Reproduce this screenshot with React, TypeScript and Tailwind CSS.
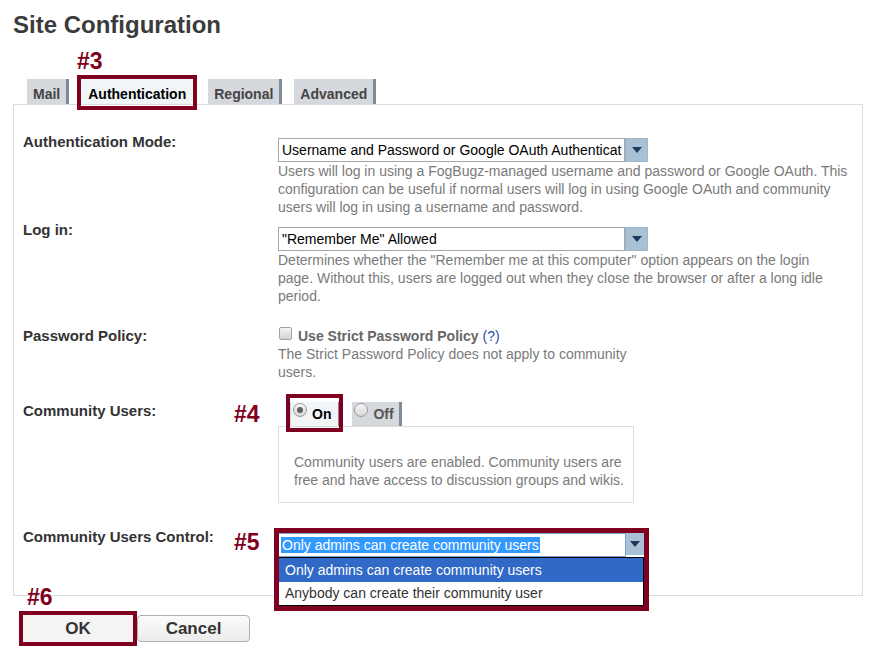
import type { ReactNode } from 'react';

const RED = 'border-[#800020]';

function Mark({ children, className }: { children: ReactNode; className?: string }) {
  return (
    <span className={`absolute text-[23px] leading-[26px] font-bold text-[#800020] ${className ?? ''}`}>
      {children}
    </span>
  );
}

function Label({ children, extra }: { children: ReactNode; extra?: ReactNode }) {
  return (
    <div className="relative w-[255px] shrink-0 text-[15px] font-bold leading-[18px] text-[#333]">
      {children}
      {extra}
    </div>
  );
}

function Arrow() {
  return (
    <svg width="10" height="6" viewBox="0 0 10 6">
      <path d="M0 0h10L5 6z" fill="#1b3a5c" />
    </svg>
  );
}

function Select({ value }: { value: string }) {
  return (
    <div className="flex h-[24px] w-[370px]">
      <div className="flex h-full w-[347px] items-center border border-[#a7a7a7] bg-white pl-[3px] text-[14px] leading-[22px] text-black whitespace-nowrap overflow-hidden">
        {value}
      </div>
      <div className="flex h-full w-[23px] items-center justify-center border border-[#9fb6c8] bg-[#a9c1d4]">
        <Arrow />
      </div>
    </div>
  );
}

function Desc({ children }: { children: ReactNode }) {
  return <div className="text-[14px] leading-[18px] text-[#7a7a7a] whitespace-nowrap">{children}</div>;
}

function Tab({ label, active }: { label: string; active?: boolean }) {
  return (
    <div
      className={`relative h-[25px] pt-[6px] px-[6px] text-[14px] leading-[18px] font-bold border-r-[3px] border-[#7e8b98] ${
        active ? 'bg-[#f2f5f8] text-black px-[7px]' : 'bg-[#d5d8dc] text-[#444]'
      }`}
    >
      {label}
      {active && <span className={`absolute -left-1 -top-1 -right-1 -bottom-[6px] border-4 ${RED}`} />}
    </div>
  );
}

function Radio({ label, on }: { label: string; on?: boolean }) {
  return (
    <div
      className={`relative flex h-[24px] items-start pl-[2px] border-r-[3px] border-[#7e8b98] ${
        on ? 'bg-[#f2f5f8] border-l border-l-[#cfd5db] pr-[7px]' : 'bg-[#d5d8dc] pr-[5px]'
      }`}
    >
      <div className="mt-[1px] flex h-[14px] w-[14px] items-center justify-center rounded-full border border-[#9c9c9c] bg-linear-to-b from-[#f6f6f6] to-[#d6d6d6]">
        {on && <div className="h-[6px] w-[6px] rounded-full bg-[#606060]" />}
      </div>
      <span className={`ml-[5px] mt-[3px] text-[14px] leading-[18px] font-bold ${on ? 'text-black' : 'text-[#555]'}`}>
        {label}
      </span>
      {on && <span className={`absolute -left-[5px] -top-[8px] -right-[5px] -bottom-[6px] border-4 ${RED}`} />}
    </div>
  );
}

export default function App() {
  return (
    <div className="relative h-[661px] w-[892px] overflow-hidden bg-white pl-[13px] font-['Liberation_Sans',Arial,sans-serif]">
      <h1 className="pt-[11px] text-[24px] leading-[28px] font-bold text-[#3b3b3b]">Site Configuration</h1>

      <div className="mt-[9px] h-[26px] pl-[64px] text-[23px] leading-[26px] font-bold text-[#800020]">#3</div>

      <div className="mt-[5px] flex gap-[12px] pl-[14px]">
        <Tab label="Mail" />
        <Tab label="Authentication" active />
        <Tab label="Regional" />
        <Tab label="Advanced" />
      </div>

      <div className="w-[850px] border border-[#dadce2] pl-[9px] pt-[28px] pb-[38px]">
        <div className="flex">
          <Label>Authentication Mode:</Label>
          <div className="pt-[5px]">
            <Select value="Username and Password or Google OAuth Authenticat" />
            <Desc>
              Users will log in using a FogBugz-managed username and password or Google OAuth. This
              <br />
              configuration can be useful if normal users will log in using Google OAuth and community
              <br />
              users will log in using a username and password.
            </Desc>
          </div>
        </div>

        <div className="mt-[5px] flex">
          <Label>Log in:</Label>
          <div className="pt-[6px]">
            <Select value={'"Remember Me" Allowed'} />
            <Desc>
              Determines whether the "Remember me at this computer" option appears on the login
              <br />
              page. Without this, users are logged out when they close the browser or after a long idle
              <br />
              period.
            </Desc>
          </div>
        </div>

        <div className="mt-[22px] flex">
          <Label>Password Policy:</Label>
          <div>
            <div className="flex items-start text-[14px] leading-[18px]">
              <div className="ml-[1px] h-[13px] w-[13px] rounded-[2px] border border-[#a2a2a2] bg-linear-to-b from-[#f4f4f4] to-[#d4d4d4]" />
              <span className="ml-[6px] font-bold text-[#666]">Use Strict Password Policy</span>
              <span className="ml-[4px] text-[#1f4fa3]">(?)</span>
            </div>
            <Desc>
              The Strict Password Policy does not apply to community
              <br />
              users.
            </Desc>
          </div>
        </div>

        <div className="mt-[21px] flex">
          <Label extra={<Mark className="left-[211px] -top-[1px]">#4</Mark>}>Community Users:</Label>
          <div>
            <div className="flex gap-[11px] pl-[12px]">
              <Radio label="On" on />
              <Radio label="Off" />
            </div>
            <div className="h-[77px] w-[356px] border border-[#dcdcdc] pl-[15px] pt-[26px]">
              <Desc>
                Community users are enabled. Community users are
                <br />
                free and have access to discussion groups and wikis.
              </Desc>
            </div>
          </div>
        </div>

        <div className="mt-[25px] flex">
          <Label extra={<Mark className="left-[211px] top-[1px]">#5</Mark>}>Community Users Control:</Label>
          <div className="pt-[5px]">
            <div className="relative z-10 w-[366px]">
              <div className="flex h-[24px]">
                <div className="flex h-full w-[348px] items-center border border-[#7d9fd0] bg-white pl-[2px] text-[14px]">
                  <span className="h-[16px] bg-[#3399ff] pl-[1px] pr-[1px] leading-[16px] text-white whitespace-nowrap">
                    Only admins can create community users
                  </span>
                </div>
                <div className="flex h-full w-[18px] items-center justify-center border-b-2 border-b-white bg-[#a9c1d4]">
                  <Arrow />
                </div>
              </div>
              <div className="absolute left-0 top-full w-[366px] border border-black bg-white text-[14px]">
                <div className="h-[24px] bg-[#3169c6] pl-[6px] leading-[24px] text-white whitespace-nowrap">
                  Only admins can create community users
                </div>
                <div className="h-[23px] pl-[6px] leading-[23px] text-[#333] whitespace-nowrap">
                  Anybody can create their community user
                </div>
              </div>
              <span className={`absolute -left-[4px] -top-[5px] h-[83px] w-[375px] border-[5px] ${RED}`} />
            </div>
          </div>
        </div>
      </div>

      <div className="relative mt-[19px] flex pl-[10px]">
        <Mark className="left-[14px] -top-[31px]">#6</Mark>
        <div className="relative flex h-[27px] w-[110px] items-center justify-center bg-[#f4f4f4] text-[17px] font-bold text-[#333]">
          OK
          <span className={`absolute -left-1 -top-1 -right-1 -bottom-1 border-4 ${RED}`} />
        </div>
        <div className="ml-[4px] flex h-[27px] w-[113px] items-center justify-center rounded-[4px] border border-[#b0b0b0] bg-linear-to-b from-[#fbfbfb] to-[#ececec] text-[17px] font-bold text-[#333]">
          Cancel
        </div>
      </div>
    </div>
  );
}
